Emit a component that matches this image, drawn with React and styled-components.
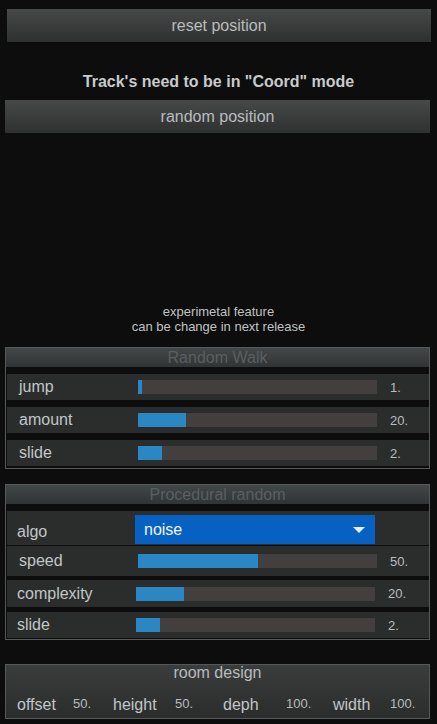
import React from "react";
import styled, { createGlobalStyle } from "styled-components";

const Global = createGlobalStyle`
  html, body {
    margin: 0;
    padding: 0;
    background: #0d0d0d;
    font-family: "Liberation Sans", Arial, sans-serif;
  }
`;

const Page = styled.div`
  width: 437px;
  height: 724px;
  background: #0d0d0d;
  display: flex;
  flex-direction: column;
  overflow: hidden;
`;

const BigButton = styled.div`
  margin: ${(p) => p.$top}px 0 0 ${(p) => p.$left}px;
  width: ${(p) => p.$w}px;
  height: 33px;
  background: linear-gradient(#474949, #2f3131);
  color: #b8bcbc;
  font-size: 16px;
  display: flex;
  align-items: center;
  justify-content: center;
`;

const Notice = styled.div`
  margin-top: 31px;
  height: 18px;
  text-align: center;
  color: #c8cacb;
  font-weight: bold;
  font-size: 16px;
  line-height: 18px;
`;

const Experimental = styled.div`
  margin-top: 171px;
  text-align: center;
  color: #c0c3c4;
  font-size: 13px;
  line-height: 15px;
`;

const Panel = styled.div`
  margin: ${(p) => p.$top}px 0 0 5px;
  width: 423px;
  border: 1px solid #555858;
  background: #0d0d0d;
  display: flex;
  flex-direction: column;
`;

const PanelHeader = styled.div`
  height: 19px;
  background: linear-gradient(#434747, #313434);
  color: #5a5f62;
  font-size: 16px;
  line-height: 19px;
  text-align: center;
  margin-bottom: 7px;
`;

const Row = styled.div`
  height: ${(p) => p.$h}px;
  margin-top: ${(p) => p.$gap}px;
  margin-left: 1px;
  background: #2b2d2d;
  display: flex;
  align-items: ${(p) => (p.$align ? p.$align : "center")};
`;

const Label = styled.div`
  width: ${(p) => p.$w}px;
  padding-left: ${(p) => p.$pad}px;
  color: #c2c6c7;
  font-size: 16px;
  flex-shrink: 0;
`;

const Track = styled.div`
  width: 239px;
  height: 14px;
  background: #433f3e;
  flex-shrink: 0;
`;

const Fill = styled.div`
  height: 100%;
  background: #2a87c4;
`;

const Value = styled.div`
  margin-left: 13px;
  color: #b8bcbd;
  font-size: 13px;
`;

const Dropdown = styled.div`
  width: 240px;
  height: 29px;
  margin-top: 4px;
  background: #0761c2;
  color: #f2f4f6;
  font-size: 16px;
  display: flex;
  align-items: center;
  justify-content: space-between;
  padding: 0 9px;
  box-sizing: border-box;
`;

const Caret = styled.div`
  width: 0;
  height: 0;
  border-left: 6px solid transparent;
  border-right: 6px solid transparent;
  border-top: 6px solid #e8eef6;
  margin-right: 1px;
`;

const RoomPanel = styled.div`
  margin: 24px 0 0 5px;
  width: 423px;
  height: 53px;
  border: 1px solid #555858;
  background: linear-gradient(#3b3d3d, #2b2d2d);
  display: flex;
  flex-direction: column;
`;

const RoomTitle = styled.div`
  text-align: center;
  color: #b8bcbd;
  font-size: 16px;
  margin-top: -2px;
  height: 20px;
  line-height: 20px;
`;

const RoomRow = styled.div`
  margin-top: 13px;
  display: flex;
  align-items: center;
  padding-left: 11px;
`;

const RoomLabel = styled.span`
  color: #c2c6c7;
  font-size: 16px;
  width: ${(p) => p.$w}px;
  flex-shrink: 0;
`;

const RoomValue = styled.span`
  color: #b8bcbd;
  font-size: 13px;
  width: ${(p) => p.$w}px;
  flex-shrink: 0;
  margin-top: -3px;
`;

const Spacer = styled.div`
  height: ${(p) => p.$h}px;
`;

const Slider = ({ pct }) => (
  <Track>
    <Fill style={{ width: `${pct}%` }} />
  </Track>
);

const SliderRow = ({ label, pct, value, h, gap, pad = 12, lw = 131 }) => (
  <Row $h={h} $gap={gap}>
    <Label $w={lw - pad} $pad={pad}>{label}</Label>
    <Slider pct={pct} />
    <Value>{value}</Value>
  </Row>
);

export default function App() {
  return (
    <Page>
      <Global />
      <BigButton $top={9} $left={7} $w={424}>reset position</BigButton>
      <Notice>Track's need to be in "Coord" mode</Notice>
      <BigButton $top={9} $left={5} $w={425}>random position</BigButton>
      <Experimental>
        experimetal feature
        <br />
        can be change in next release
      </Experimental>

      <Panel $top={13}>
        <PanelHeader>Random Walk</PanelHeader>
        <SliderRow label="jump" pct={1.5} value="1." h={26} gap={0} />
        <SliderRow label="amount" pct={20} value="20." h={26} gap={7} />
        <SliderRow label="slide" pct={10} value="2." h={26} gap={7} />
        <Spacer $h={2} />
      </Panel>

      <Panel $top={15}>
        <PanelHeader>Procedural random</PanelHeader>
        <Row $h={34} $gap={0} $align="flex-start">
          <Label $w={118} $pad={10} style={{ marginTop: 12 }}>algo</Label>
          <Dropdown>
            noise
            <Caret />
          </Dropdown>
        </Row>
        <SliderRow label="speed" pct={50} value="50." h={30} gap={1} />
        <SliderRow label="complexity" pct={20} value="20." h={27} gap={4} pad={10} lw={129} />
        <SliderRow label="slide" pct={10} value="2." h={26} gap={5} pad={10} lw={129} />
        <Spacer $h={1} />
      </Panel>

      <RoomPanel>
        <RoomTitle>room design</RoomTitle>
        <RoomRow>
          <RoomLabel $w={56}>offset</RoomLabel>
          <RoomValue $w={40}>50.</RoomValue>
          <RoomLabel $w={62}>height</RoomLabel>
          <RoomValue $w={48}>50.</RoomValue>
          <RoomLabel $w={63}>deph</RoomLabel>
          <RoomValue $w={47}>100.</RoomValue>
          <RoomLabel $w={57}>width</RoomLabel>
          <RoomValue $w={30}>100.</RoomValue>
        </RoomRow>
      </RoomPanel>
    </Page>
  );
}
